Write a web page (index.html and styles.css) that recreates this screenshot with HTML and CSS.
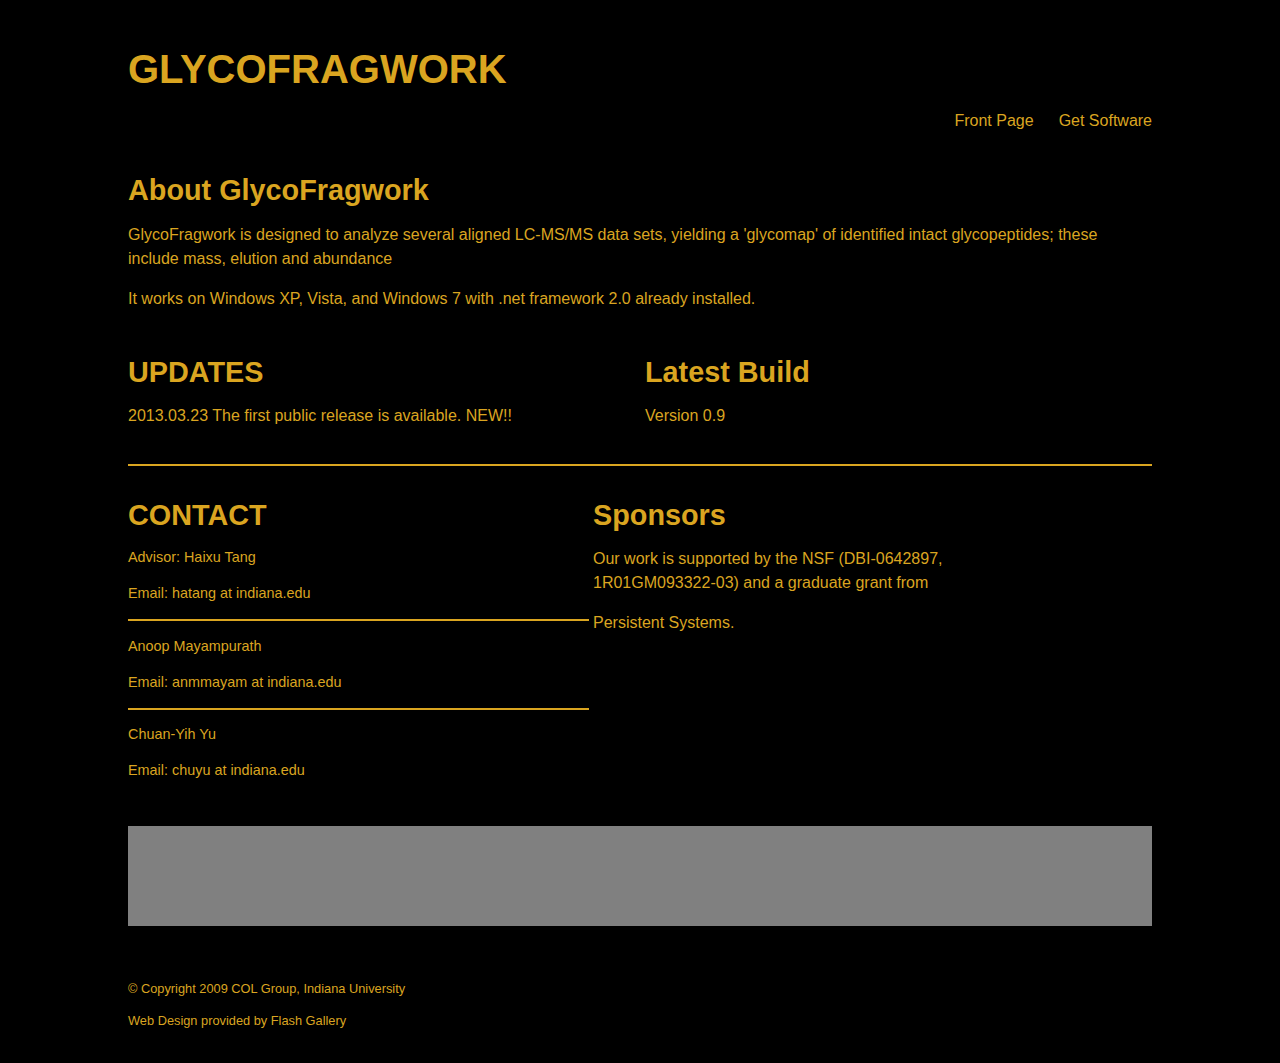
FILE: index.html
```html
<!DOCTYPE html>
<html lang="en">
<head>
<meta charset="utf-8">
<title>GlycoFragwork</title>
<link rel="stylesheet" href="styles.css">
</head>
<body>
<div class="page">
  <header class="header">
    <h1 class="site-title">GLYCOFRAGWORK</h1>
    <nav class="nav">
      <a href="#">Front Page</a>
      <a href="#">Get Software</a>
    </nav>
  </header>

  <section class="about">
    <h2 class="heading">About GlycoFragwork</h2>
    <p class="text first">GlycoFragwork is designed to analyze several aligned LC-MS/MS data sets, yielding a 'glycomap' of identified intact glycopeptides; these include mass, elution and abundance</p>
    <p class="text">It works on Windows XP, Vista, and Windows 7 with .net framework 2.0 already installed.</p>
  </section>

  <section class="twocol">
    <div class="col">
      <h2 class="heading">UPDATES</h2>
      <p class="text first">2013.03.23 The first public release is available. NEW!!</p>
    </div>
    <div class="col">
      <h2 class="heading">Latest Build</h2>
      <p class="text first">Version 0.9</p>
    </div>
  </section>

  <hr class="rule">

  <section class="lower">
    <div class="contact">
      <h2 class="heading">CONTACT</h2>
      <p class="small lead">Advisor: Haixu Tang</p>
      <p class="small">Email: hatang at indiana.edu</p>
      <hr class="rule thin-gap">
      <p class="small">Anoop Mayampurath</p>
      <p class="small">Email: anmmayam at indiana.edu</p>
      <hr class="rule thin-gap">
      <p class="small">Chuan-Yih Yu</p>
      <p class="small">Email: chuyu at indiana.edu</p>
    </div>
    <div class="sponsors">
      <h2 class="heading">Sponsors</h2>
      <p class="text sp-first">Our work is supported by the NSF (DBI-0642897, 1R01GM093322-03) and a graduate grant from</p>
      <p class="text">Persistent Systems.</p>
    </div>
  </section>

  <div class="banner"></div>

  <footer class="footer">
    <p>© Copyright 2009 COL Group, Indiana University</p>
    <p>Web Design provided by Flash Gallery</p>
  </footer>
</div>
</body>
</html>
```

FILE: styles.css
```css
html, body {
  margin: 0;
  padding: 0;
  background: #000;
}

body {
  font-family: "Liberation Sans", Arial, Helvetica, sans-serif;
  color: #daa520;
  font-size: 16px;
  line-height: 1.5;
}

.page {
  width: 1024px;
  margin: 0 auto;
  padding-bottom: 20px;
}

.header {
  padding-top: 45px;
}

.site-title {
  margin: 0;
  font-size: 40px;
  line-height: 48px;
  font-weight: bold;
}

.nav {
  display: flex;
  justify-content: flex-end;
  gap: 25px;
  margin-top: 16px;
  line-height: 24px;
}

.nav a {
  color: #daa520;
  text-decoration: none;
}

.heading {
  margin: 0;
  font-size: 28.8px;
  line-height: 34px;
  font-weight: bold;
}

.about {
  margin-top: 40px;
}

.text {
  margin: 16px 0 0;
  line-height: 24px;
}

.text.first {
  margin-top: 16px;
}

.twocol {
  display: grid;
  grid-template-columns: 517px 1fr;
  margin-top: 44px;
}

.twocol .text.first {
  margin-top: 15px;
}

.rule {
  border: 0;
  height: 2px;
  background: #daa520;
  margin: 36px 0 0;
}

.lower {
  display: flex;
  gap: 4px;
  margin-top: 32px;
}

.contact {
  width: 461px;
}

.contact .rule.thin-gap {
  margin: 14.4px 0 0;
}

.small {
  margin: 14.4px 0 0;
  font-size: 14.4px;
  line-height: 21.6px;
}

.small.lead {
  margin-top: 15.4px;
}

.sponsors {
  width: 360px;
}

.sponsors .sp-first {
  margin-top: 14.5px;
}

.banner {
  height: 100px;
  background: #808080;
  margin-top: 44px;
}

.footer {
  margin-top: 53px;
  font-size: 12.8px;
  line-height: 19.2px;
}

.footer p {
  margin: 12.8px 0 0;
}
```
